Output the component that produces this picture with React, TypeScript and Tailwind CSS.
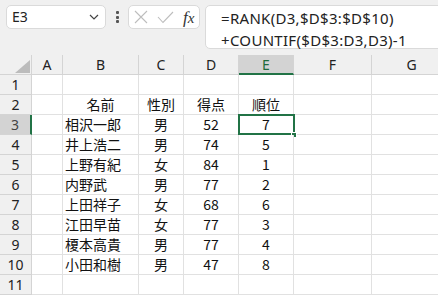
import React from "react";

const colW = [32, 31, 76, 45, 55, 55, 78, 80];
const letters = ["", "A", "B", "C", "D", "E", "F", "G"];

type Row = { n: number; b?: string; c?: string; d?: string; e?: string; head?: boolean };
const rows: Row[] = [
  { n: 1 },
  { n: 2, b: "名前", c: "性別", d: "得点", e: "順位", head: true },
  { n: 3, b: "相沢一郎", c: "男", d: "52", e: "7" },
  { n: 4, b: "井上浩二", c: "男", d: "74", e: "5" },
  { n: 5, b: "上野有紀", c: "女", d: "84", e: "1" },
  { n: 6, b: "内野武", c: "男", d: "77", e: "2" },
  { n: 7, b: "上田祥子", c: "女", d: "68", e: "6" },
  { n: 8, b: "江田早苗", c: "女", d: "77", e: "3" },
  { n: 9, b: "榎本高貴", c: "男", d: "77", e: "4" },
  { n: 10, b: "小田和樹", c: "男", d: "47", e: "8" },
  { n: 11 },
];

const uiFont = { fontFamily: '"Noto Sans", "Open Sans", sans-serif' };
const cellFont = { fontFamily: '"Noto Sans CJK JP", "Noto Sans", sans-serif' };

export default function App() {
  return (
    <div className="w-[438px] h-[295px] overflow-hidden bg-[#f0f0f0] text-[#222]" style={uiFont}>
      {/* Formula bar */}
      <div className="h-[55px] flex items-start pl-[6px] pt-[5px]">
        <div className="w-[100px] h-[24px] bg-white border border-[#dadada] rounded-[5px] flex items-center justify-between pl-[5px] pr-[6px]">
          <span className="text-[14px] leading-none text-[#222]">E3</span>
          <svg width="10" height="6" viewBox="0 0 10 6">
            <polyline points="1,1 5,5 9,1" fill="none" stroke="#444" strokeWidth="1.2" />
          </svg>
        </div>
        <div className="w-[22px] h-[24px] flex flex-col items-center justify-center gap-[1.5px]">
          <div className="w-[3px] h-[3px] bg-[#555] rounded-[1px]" />
          <div className="w-[3px] h-[3px] bg-[#555] rounded-[1px]" />
          <div className="w-[3px] h-[3px] bg-[#555] rounded-[1px]" />
        </div>
        <div className="w-[72px] h-[24px] bg-white border border-[#dadada] rounded-[5px] flex items-center pl-[5px]">
          <svg width="14" height="14" viewBox="0 0 14 14">
            <path d="M1 1 L13 13 M13 1 L1 13" stroke="#bdbdbd" strokeWidth="1.1" fill="none" />
          </svg>
          <svg className="ml-[9px]" width="17" height="13" viewBox="0 0 17 13">
            <polyline points="1,6 6,11.5 16,1" stroke="#bdbdbd" strokeWidth="1.1" fill="none" />
          </svg>
          <span
            className="ml-[9px] text-[17px] italic leading-none text-[#333]"
            style={{ fontFamily: '"Liberation Serif", "DejaVu Serif", serif' }}
          >
            f<span className="text-[15px]">x</span>
          </span>
        </div>
        <div className="ml-[5px] flex-1 mr-[-6px] h-[44px] bg-white border border-[#dadada] rounded-[5px] pl-[15px] pt-[1px] text-[15px] tracking-[0.3px] leading-[22px] text-[#222]">
          <div>=RANK(D3,$D$3:$D$10)</div>
          <div>+COUNTIF($D$3:D3,D3)-1</div>
        </div>
      </div>

      {/* Column headers */}
      <div className="flex h-[20px]">
        {letters.map((l, i) => {
          const sel = l === "E";
          return (
            <div
              key={i}
              className={
                "shrink-0 relative flex items-center justify-center text-[14px] border-r border-[#d4d4d4] " +
                (sel ? "bg-[#d3d3d3] text-[#1e6b3c] border-b-2 border-b-[#217346]" : "bg-[#f0f0f0] border-b border-b-[#d4d4d4]")
              }
              style={{ width: colW[i] }}
            >
              {i === 0 ? (
                <svg className="absolute left-[15px] top-[5px]" width="15" height="13" viewBox="0 0 15 13">
                  <polygon points="15,0 15,13 0,13" fill="#bcbcbc" />
                </svg>
              ) : (
                l
              )}
            </div>
          );
        })}
      </div>

      {/* Rows */}
      {rows.map((r) => {
        const rowSel = r.n === 3;
        return (
          <div key={r.n} className="flex h-[20px]">
            <div
              className={
                "shrink-0 flex items-center justify-center text-[14px] border-b border-[#d4d4d4] " +
                (rowSel ? "bg-[#d3d3d3] border-r-2 border-r-[#217346] text-[#444]" : "bg-[#f0f0f0] border-r border-r-[#d4d4d4]")
              }
              style={{ width: colW[0] }}
            >
              {r.n}
            </div>
            <div className="shrink-0 bg-white border-r border-b border-[#e1e1e1]" style={{ width: colW[1] }} />
            <div
              className={
                "shrink-0 bg-white border-r border-b border-[#e1e1e1] flex items-center text-[14px] text-[#111] " +
                (r.head ? "justify-center" : "pl-[2px]")
              }
              style={{ width: colW[2], ...cellFont }}
            >
              {r.b}
            </div>
            <div
              className="shrink-0 bg-white border-r border-b border-[#e1e1e1] flex items-center justify-center text-[14px] text-[#111]"
              style={{ width: colW[3], ...cellFont }}
            >
              {r.c}
            </div>
            <div
              className="shrink-0 bg-white border-r border-b border-[#e1e1e1] flex items-center justify-center text-[14px] text-[#111]"
              style={{ width: colW[4], ...cellFont }}
            >
              {r.d}
            </div>
            <div
              className="shrink-0 relative bg-white border-r border-b border-[#e1e1e1] flex items-center justify-center text-[14px] text-[#111]"
              style={{ width: colW[5], ...cellFont }}
            >
              {r.e}
              {rowSel && (
                <>
                  <div className="absolute left-[-1px] top-[-1px] right-[-2px] bottom-[-1px] border-2 border-[#217346] pointer-events-none" />
                  <div className="absolute right-[-4px] bottom-[-4px] w-[6px] h-[6px] bg-[#217346] border border-white" />
                </>
              )}
            </div>
            <div className="shrink-0 bg-white border-r border-b border-[#e1e1e1]" style={{ width: colW[6] }} />
            <div className="shrink-0 bg-white border-r border-b border-[#e1e1e1]" style={{ width: colW[7] }} />
          </div>
        );
      })}
    </div>
  );
}
